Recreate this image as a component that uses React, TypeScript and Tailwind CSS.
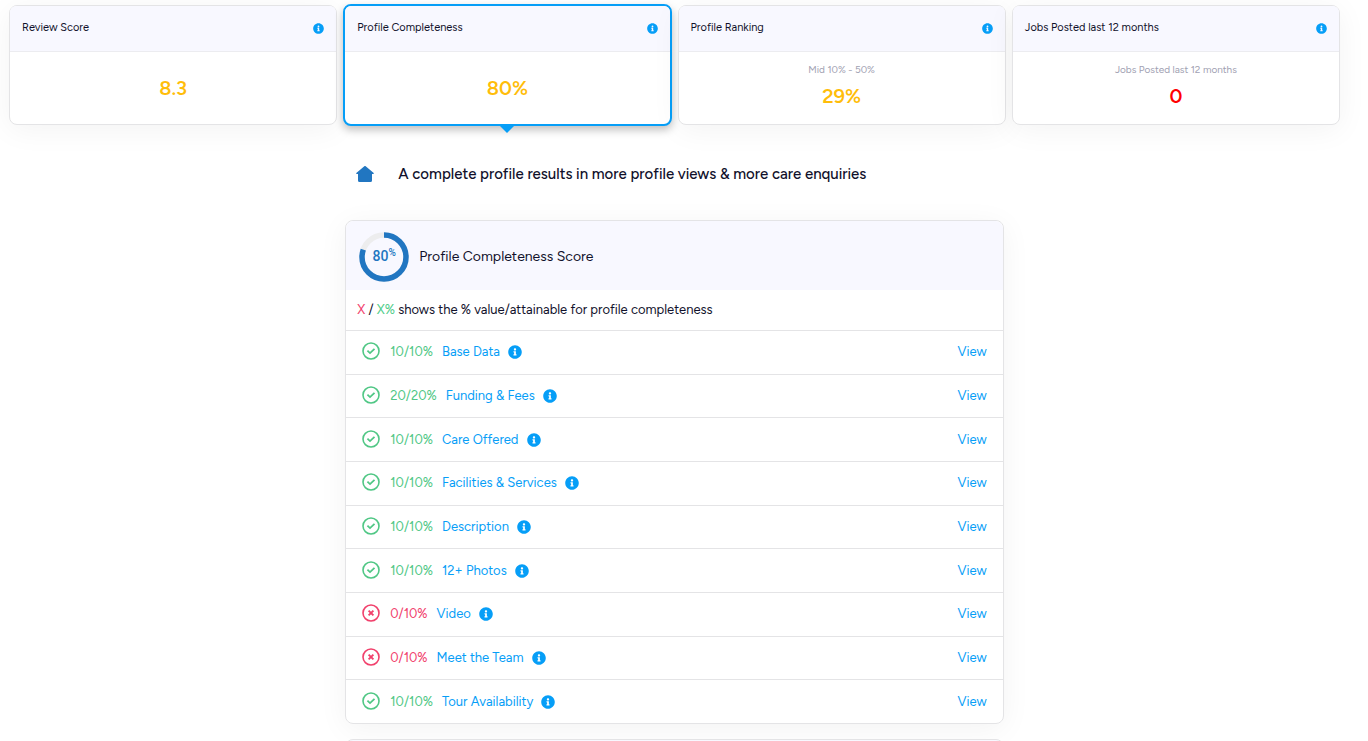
import { FaInfoCircle } from 'react-icons/fa'

type Stat = {
  title: string
  value: string
  note?: string
  color: string
  active?: boolean
}

const stats: Stat[] = [
  { title: 'Review Score', value: '8.3', color: 'text-[#ffbd0a]' },
  { title: 'Profile Completeness', value: '80%', color: 'text-[#ffbd0a]', active: true },
  { title: 'Profile Ranking', value: '29%', note: 'Mid 10% - 50%', color: 'text-[#ffbd0a]' },
  {
    title: 'Jobs Posted last 12 months',
    value: '0',
    note: 'Jobs Posted last 12 months',
    color: 'text-[#ff0000]',
  },
]

const sections = [
  { name: 'Base Data', score: 10, max: 10 },
  { name: 'Funding & Fees', score: 20, max: 20 },
  { name: 'Care Offered', score: 10, max: 10 },
  { name: 'Facilities & Services', score: 10, max: 10 },
  { name: 'Description', score: 10, max: 10 },
  { name: '12+ Photos', score: 10, max: 10 },
  { name: 'Video', score: 0, max: 10 },
  { name: 'Meet the Team', score: 0, max: 10 },
  { name: 'Tour Availability', score: 10, max: 10 },
]

function StatusIcon({ done }: { done: boolean }) {
  return (
    <svg
      viewBox="0 0 18 18"
      className="mb-[2px] h-[18px] w-[18px] shrink-0"
      fill="none"
      stroke="currentColor"
      strokeWidth="1.6"
      aria-hidden="true"
    >
      <circle cx="9" cy="9" r="8" />
      {done ? (
        <path d="M5.4 8.7 8 11.1 12.5 6.8" strokeWidth="1.8" />
      ) : (
        <path d="M6.6 6.6 11.4 11.4M11.4 6.6 6.6 11.4" strokeWidth="1.9" />
      )}
    </svg>
  )
}

function ScoreRing({ value }: { value: number }) {
  const r = 22
  const length = 2 * Math.PI * r
  return (
    <div className="grid h-[50px] w-[50px] shrink-0 place-items-center">
      <svg viewBox="0 0 50 50" className="col-start-1 row-start-1 h-full w-full" fill="none" strokeWidth="5.5">
        <circle cx="25" cy="25" r={r} stroke="#ededee" />
        <circle
          cx="25"
          cy="25"
          r={r}
          stroke="#2176c1"
          strokeDasharray={`${(length * value) / 100} ${length}`}
          transform="rotate(-90 25 25)"
        />
      </svg>
      <div className="col-start-1 row-start-1 flex items-start pb-[2px] font-[Roboto,sans-serif] font-medium text-[#2176c1]">
        <span className="text-[14px] leading-4">{value}</span>
        <span className="text-[10px] leading-[10px]">%</span>
      </div>
    </div>
  )
}

function StatCard({ title, value, note, color, active }: Stat) {
  return (
    <article
      className={`relative flex flex-col rounded-lg bg-white ${
        active
          ? '-my-px h-[122px] border-2 border-[#069ef7] shadow-[0_4px_8px_rgba(0,0,0,0.25)]'
          : 'h-[120px] border border-[#e4e4e6] shadow-[0_5px_30px_rgba(0,0,0,0.05)]'
      }`}
    >
      <header className="flex h-[46px] items-center justify-between rounded-t-md border-b border-[#ececf0] bg-[#f8f8ff] px-3 pb-px">
        <h2 className="text-[11px] leading-4">{title}</h2>
        <button type="button" aria-label={`About ${title}`} className="text-[#069ef7]">
          <FaInfoCircle size={11} />
        </button>
      </header>
      <div className="flex flex-1 flex-col items-center justify-center">
        {note && <p className="text-[10px] leading-4 text-[#a1a1b2]">{note}</p>}
        <p className={`text-[20px] leading-9 font-semibold ${color}`}>{value}</p>
      </div>
      {active && (
        <svg viewBox="0 0 16 8" className="absolute top-full left-1/2 mt-px h-2 w-4 -translate-x-1/2 fill-[#069ef7]" aria-hidden="true">
          <path d="M0 0H16L8 8Z" />
        </svg>
      )}
    </article>
  )
}

export default function App() {
  return (
    <main className="h-screen overflow-hidden bg-white pt-[5px] pr-7 pl-[9px] font-[Figtree,Lato,sans-serif] text-[#11112b]">
      <div className="grid grid-cols-4 gap-x-[6px]">
        {stats.map((s) => (
          <StatCard key={s.title} {...s} />
        ))}

        <div className="col-span-2 col-start-2 mx-[2px]">
          <div className="flex h-[95px] items-center gap-6 pt-[2px] pl-[11px]">
            <svg viewBox="0 0 18 16" className="h-4 w-[18px] shrink-0 fill-[#2176c1]" aria-hidden="true">
              <path d="M8.3.3a1 1 0 0 1 1.4 0L17.7 7a.6.6 0 0 1-.4 1H16v6.5a1.5 1.5 0 0 1-1.5 1.5h-11A1.5 1.5 0 0 1 2 14.5V8H.7a.6.6 0 0 1-.4-1Z" />
            </svg>
            <h1 className="text-[15px] leading-5 font-medium">
              A complete profile results in more profile views &amp; more care enquiries
            </h1>
          </div>

          <section className="rounded-lg border border-[#e4e4e6] shadow-[0_5px_30px_rgba(0,0,0,0.05)]">
            <header className="flex h-[69px] items-center gap-[10px] rounded-t-lg bg-[#f8f8ff] px-[13px] pt-[2px]">
              <ScoreRing value={80} />
              <h2 className="text-[14px] leading-5">Profile Completeness Score</h2>
            </header>
            <p className="flex h-10 items-center px-[11px] text-[13px] leading-5 whitespace-pre">
              <span className="text-[#f1416c]">X</span> / <span className="text-[#50cd89]">X%</span>
              {' shows the % value/attainable for profile completeness'}
            </p>
            <ul className="grid h-[393px] auto-rows-fr text-[13px] leading-5">
              {sections.map((s) => {
                const done = s.score === s.max
                return (
                  <li key={s.name} className="flex items-center border-t border-[#e4e4e6] px-4">
                    <span className={`flex items-center gap-[10px] ${done ? 'text-[#50c785]' : 'text-[#f1416c]'}`}>
                      <StatusIcon done={done} />
                      {s.score}/{s.max}%
                    </span>
                    <a href="#" className="ml-[9px] text-[#069ef7]">
                      {s.name}
                    </a>
                    <button type="button" aria-label={`About ${s.name}`} className="ml-2 text-[#069ef7]">
                      <FaInfoCircle size={14} />
                    </button>
                    <a href="#" className="ml-auto text-[#069ef7]">
                      View
                    </a>
                  </li>
                )
              })}
            </ul>
          </section>

          <section className="mt-[15px] h-[70px] rounded-lg border border-[#e4e4e6] bg-[#f8f8ff]" />
        </div>
      </div>
    </main>
  )
}
